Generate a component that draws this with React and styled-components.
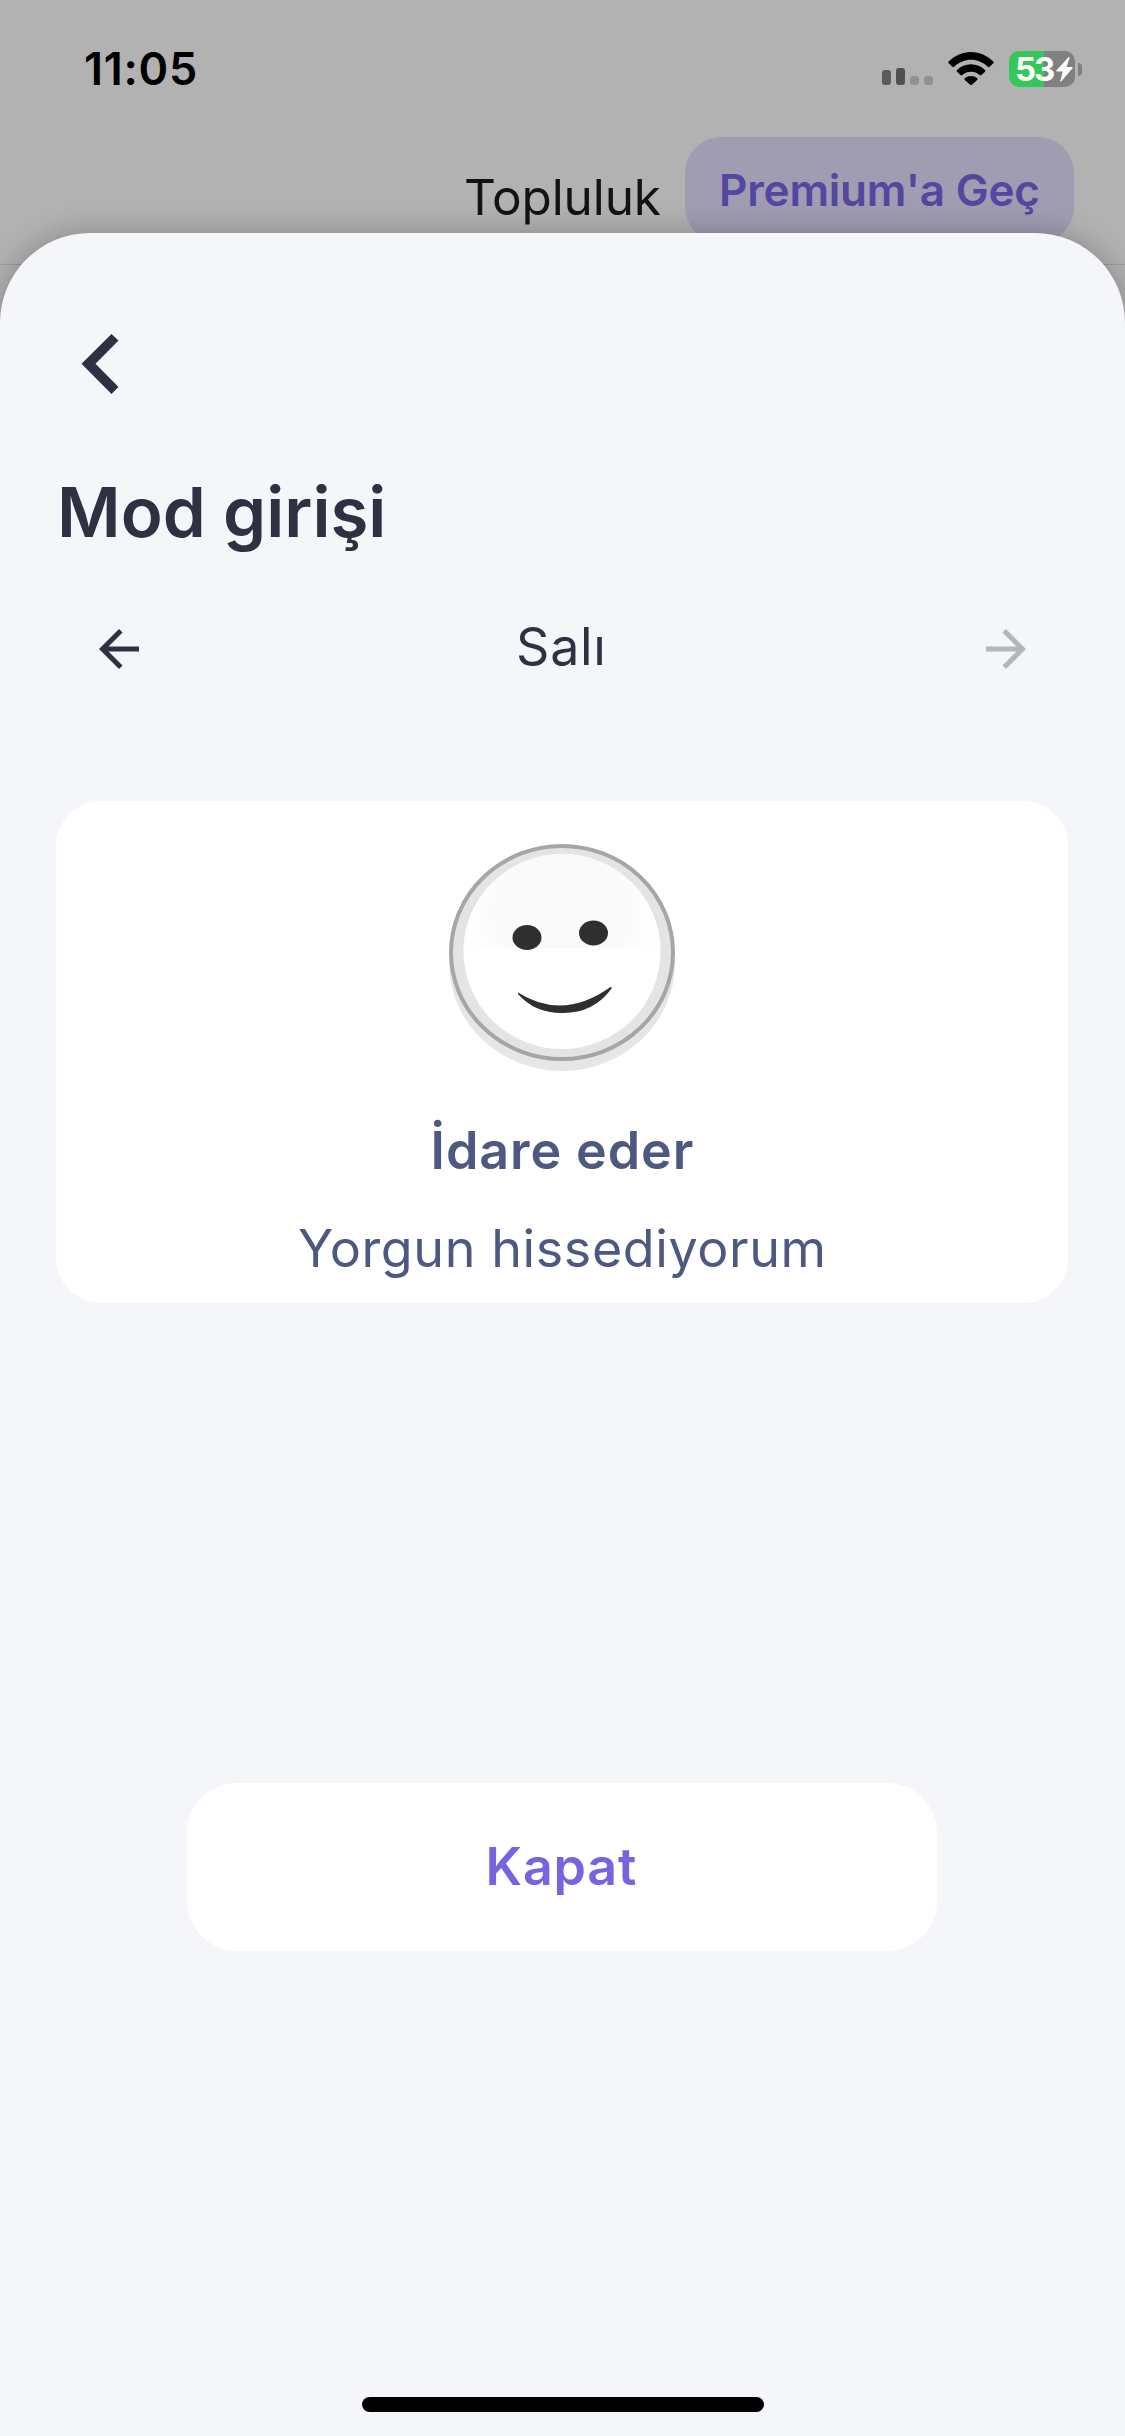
import React from "react";
import styled, { createGlobalStyle } from "styled-components";

const GlobalStyle = createGlobalStyle`
  * { box-sizing: border-box; }
  body { margin: 0; background: #b2b2b2; }
  button { border: 0; padding: 0; background: none; font: inherit; color: inherit; }
`;

const Screen = styled.div`
  width: 1125px;
  height: 2436px;
  overflow: hidden;
  display: flex;
  flex-direction: column;
  background: #b2b2b2;
  font-family: Inter, "Noto Sans", sans-serif;
`;

const Label = styled.span`
  display: block;
  white-space: nowrap;
  font-size: ${(p) => p.$size}px;
  font-weight: ${(p) => p.$weight || 400};
  letter-spacing: ${(p) => p.$track || 0}px;
  margin-right: ${(p) => -(p.$track || 0)}px;
  line-height: ${(p) => p.$line}px;
  color: ${(p) => p.$color};
`;

const StatusBar = styled.header`
  height: 137px;
  padding: 39px 43px 0 84px;
  display: flex;
  justify-content: space-between;
  align-items: flex-start;
`;

const StatusIcons = styled.div`
  display: flex;
  align-items: center;
  height: 60px;
  gap: 15px;
`;

const Battery = styled.div`
  display: flex;
  align-items: center;
  gap: 3px;
`;

const BatteryBody = styled.div`
  width: 66px;
  height: 36px;
  padding-left: 6px;
  border-radius: 10px;
  display: flex;
  align-items: center;
  gap: 1px;
  background: linear-gradient(90deg, #34c759 53%, #808080 53%);
`;

const BatteryTip = styled.div`
  width: 4px;
  height: 13px;
  border-radius: 0 5px 5px 0;
  background: #808080;
`;

const TopBar = styled.nav`
  height: 128px;
  flex: none;
  padding-right: 51px;
  border-bottom: 1px solid #9c9c9e;
  display: flex;
  justify-content: flex-end;
  align-items: flex-start;
  gap: 24px;
`;

const TabTitle = styled.div`
  padding-top: 30px;
`;

const PremiumButton = styled.button`
  width: 389px;
  height: 106px;
  border-radius: 36px;
  background: #a09cb2;
  display: flex;
  justify-content: center;
  align-items: center;
`;

const Sheet = styled.main`
  position: relative;
  flex: 1;
  margin-top: -32px;
  padding: 101px 57px 0 56px;
  border-radius: 90px 90px 0 0;
  background: #f4f6fa;
  box-shadow: 0 0 30px rgba(0, 0, 0, 0.25);
  display: flex;
  flex-direction: column;
`;

const BackButton = styled.button`
  width: 36px;
  height: 60px;
  margin-left: 26px;
  display: flex;
`;

const Heading = styled.h1`
  margin: 78px 0 0 1px;
`;

const DayPicker = styled.div`
  margin-top: 67px;
  padding: 0 32px 0 33px;
  display: flex;
  justify-content: space-between;
  align-items: center;
`;

const ArrowButton = styled.button`
  width: 60px;
  height: 60px;
  display: flex;
  color: ${(p) => (p.disabled ? "#b4b6bc" : "#2e3142")};
`;

const Day = styled.div`
  padding: 0 3px 4px 0;
`;

const MoodCard = styled.section`
  margin-top: 122px;
  height: 502px;
  padding-top: 40px;
  border-radius: 45px;
  background: #fff;
  display: flex;
  flex-direction: column;
  align-items: center;
`;

const MoodName = styled.div`
  margin-top: 38px;
`;

const MoodNote = styled.div`
  margin-top: 18px;
`;

const CloseButton = styled.button`
  width: 750px;
  height: 168px;
  margin: 480px 0 0 131px;
  padding-right: 2px;
  border-radius: 50px;
  background: #fff;
  display: flex;
  justify-content: center;
  align-items: center;
`;

const HomeIndicator = styled.div`
  width: 402px;
  height: 15px;
  margin: auto 0 24px 306px;
  border-radius: 8px;
  background: #000;
`;

const SignalIcon = () => (
  <svg width="51" height="36" viewBox="0 0 51 36">
    <rect x="0" y="19" width="9" height="15" rx="3" fill="#5c5c5c" />
    <rect x="14" y="17" width="9" height="17" rx="3" fill="#505050" />
    <rect x="28" y="25" width="9" height="9" rx="3" fill="#919191" />
    <rect x="42" y="25" width="9" height="9" rx="3" fill="#919191" />
  </svg>
);

const WifiIcon = () => (
  <svg width="46" height="36" viewBox="0 0 46 36">
    <path d="M0.7 10.5C6.7 4.6 14.5 1 23 1s16.300 3.600 22.300 9.500c.5.500.5 1.200 0 1.700l-3.700 3.600c-.5.500-1.200.5-1.700 0C35.300 11.500 29.400 8.800 23 8.800S10.700 11.500 6.100 15.800c-.5.500-1.200.5-1.700 0L.7 12.200c-.5-.5-.5-1.200 0-1.700z" />
    <path d="M9 19c3.700-3.500 8.600-5.700 14-5.700s10.300 2.200 14 5.700c.5.500.5 1.200 0 1.700l-3.500 3.300c-.5.500-1.200.5-1.700 0-2.400-2.100-5.400-3.300-8.800-3.300s-6.400 1.200-8.800 3.300c-.5.500-1.200.5-1.700 0L9 20.700c-.5-.5-.5-1.200 0-1.700z" />
    <path d="M16.800 27.300c1.700-1.500 3.800-2.300 6.200-2.300s4.500.8 6.200 2.300c.5.500.5 1.200 0 1.700l-5.400 4.800c-.5.400-1.100.4-1.600 0L16.800 29c-.5-.5-.5-1.200 0-1.700z" />
  </svg>
);

const BoltIcon = () => (
  <svg width="17" height="25" viewBox="0 0 17 25">
    <path d="M12.500.3.500 13.300c-.5.600-.2 1.300.6 1.300h5.700L4.300 23.700c-.2.900.6 1.200 1.100.6l11-13c.5-.6.200-1.300-.6-1.300h-5.300l3.100-9c.2-.9-.6-1.200-1.100-.7z" fill="#fff" />
  </svg>
);

const ChevronIcon = () => (
  <svg width="37" height="60" viewBox="0 0 37 60" overflow="visible">
    <path d="M29.500 0 36.500 6.600 13.500 29.800 36.500 53 29.500 60-.5 29.800z" fill="#2e3142" />
  </svg>
);

const ArrowIcon = ({ forward }) => (
  <svg width="60" height="60" viewBox="0 0 24 24" fill="currentColor">
    <path
      d={
        forward
          ? "M12 4l-1.410 1.410L16.170 11H4v2h12.170l-5.580 5.590L12 20l8-8z"
          : "M20 11H7.830l5.590-5.590L12 4l-8 8 8 8 1.410-1.410L7.830 13H20v-2z"
      }
    />
  </svg>
);

const FaceIcon = () => (
  <svg width="230" height="232" viewBox="0 0 230 232">
    <defs>
      <radialGradient id="shine" gradientUnits="userSpaceOnUse" cx="115" cy="72" r="88">
        <stop offset="0" stopColor="#f9f9f9" />
        <stop offset="0.75" stopColor="#fafafa" />
        <stop offset="1" stopColor="#fefefe" />
      </radialGradient>
      <clipPath id="forehead">
        <rect x="0" y="0" width="230" height="107" />
      </clipPath>
    </defs>
    <ellipse cx="115" cy="122" rx="113" ry="108" fill="#e6e6e6" />
    <ellipse cx="115" cy="111.500" rx="111" ry="106.500" fill="#e4e4e4" stroke="#a6a6a6" strokeWidth="4" />
    <ellipse cx="115" cy="110.500" rx="98.500" ry="97.500" fill="#fff" />
    <ellipse cx="115" cy="110.500" rx="98.500" ry="97.500" fill="url(#shine)" clipPath="url(#forehead)" />
    <ellipse cx="80" cy="96.500" rx="14.500" ry="12.500" fill="#2f2f2f" />
    <ellipse cx="146.500" cy="92" rx="14.500" ry="12.500" fill="#2f2f2f" />
    <path d="M71 151.500Q116 180 163.500 146Q165 145.500 164.500 147.500Q147 172 116 172Q88 172.500 71 153z" fill="#2f2f2f" />
  </svg>
);

export default function App() {
  return (
    <Screen>
      <GlobalStyle />
      <StatusBar>
        <Label $size={45} $weight={600} $line={60} $track={0.7} $color="#000">11:05</Label>
        <StatusIcons>
          <SignalIcon />
          <WifiIcon />
          <Battery>
            <BatteryBody>
              <Label $size={33} $weight={700} $line={36} $track={-2} $color="#fff">53</Label>
              <BoltIcon />
            </BatteryBody>
            <BatteryTip />
          </Battery>
        </StatusIcons>
      </StatusBar>
      <TopBar>
        <TabTitle>
          <Label $size={49.5} $line={60} $track={-0.1} $color="#131313">Topluluk</Label>
        </TabTitle>
        <PremiumButton>
          <Label $size={44} $weight={600} $line={60} $track={-0.2} $color="#53479f">Premium'a Geç</Label>
        </PremiumButton>
      </TopBar>
      <Sheet>
        <BackButton aria-label="Geri"><ChevronIcon /></BackButton>
        <Heading>
          <Label $size={69} $weight={600} $line={80} $color="#2e3142">Mod girişi</Label>
        </Heading>
        <DayPicker>
          <ArrowButton aria-label="Önceki gün"><ArrowIcon /></ArrowButton>
          <Day>
            <Label $size={52} $line={56} $track={0.7} $color="#2e3142">Salı</Label>
          </Day>
          <ArrowButton aria-label="Sonraki gün" disabled><ArrowIcon forward /></ArrowButton>
        </DayPicker>
        <MoodCard>
          <FaceIcon />
          <MoodName>
            <Label $size={52} $weight={600} $line={80} $track={0.9} $color="#4d5981">İdare eder</Label>
          </MoodName>
          <MoodNote>
            <Label $size={52} $line={80} $track={0.6} $color="#4d5981">Yorgun hissediyorum</Label>
          </MoodNote>
        </MoodCard>
        <CloseButton>
          <Label $size={52} $weight={600} $line={60} $track={0.8} $color="#7566e0">Kapat</Label>
        </CloseButton>
        <HomeIndicator />
      </Sheet>
    </Screen>
  );
}
